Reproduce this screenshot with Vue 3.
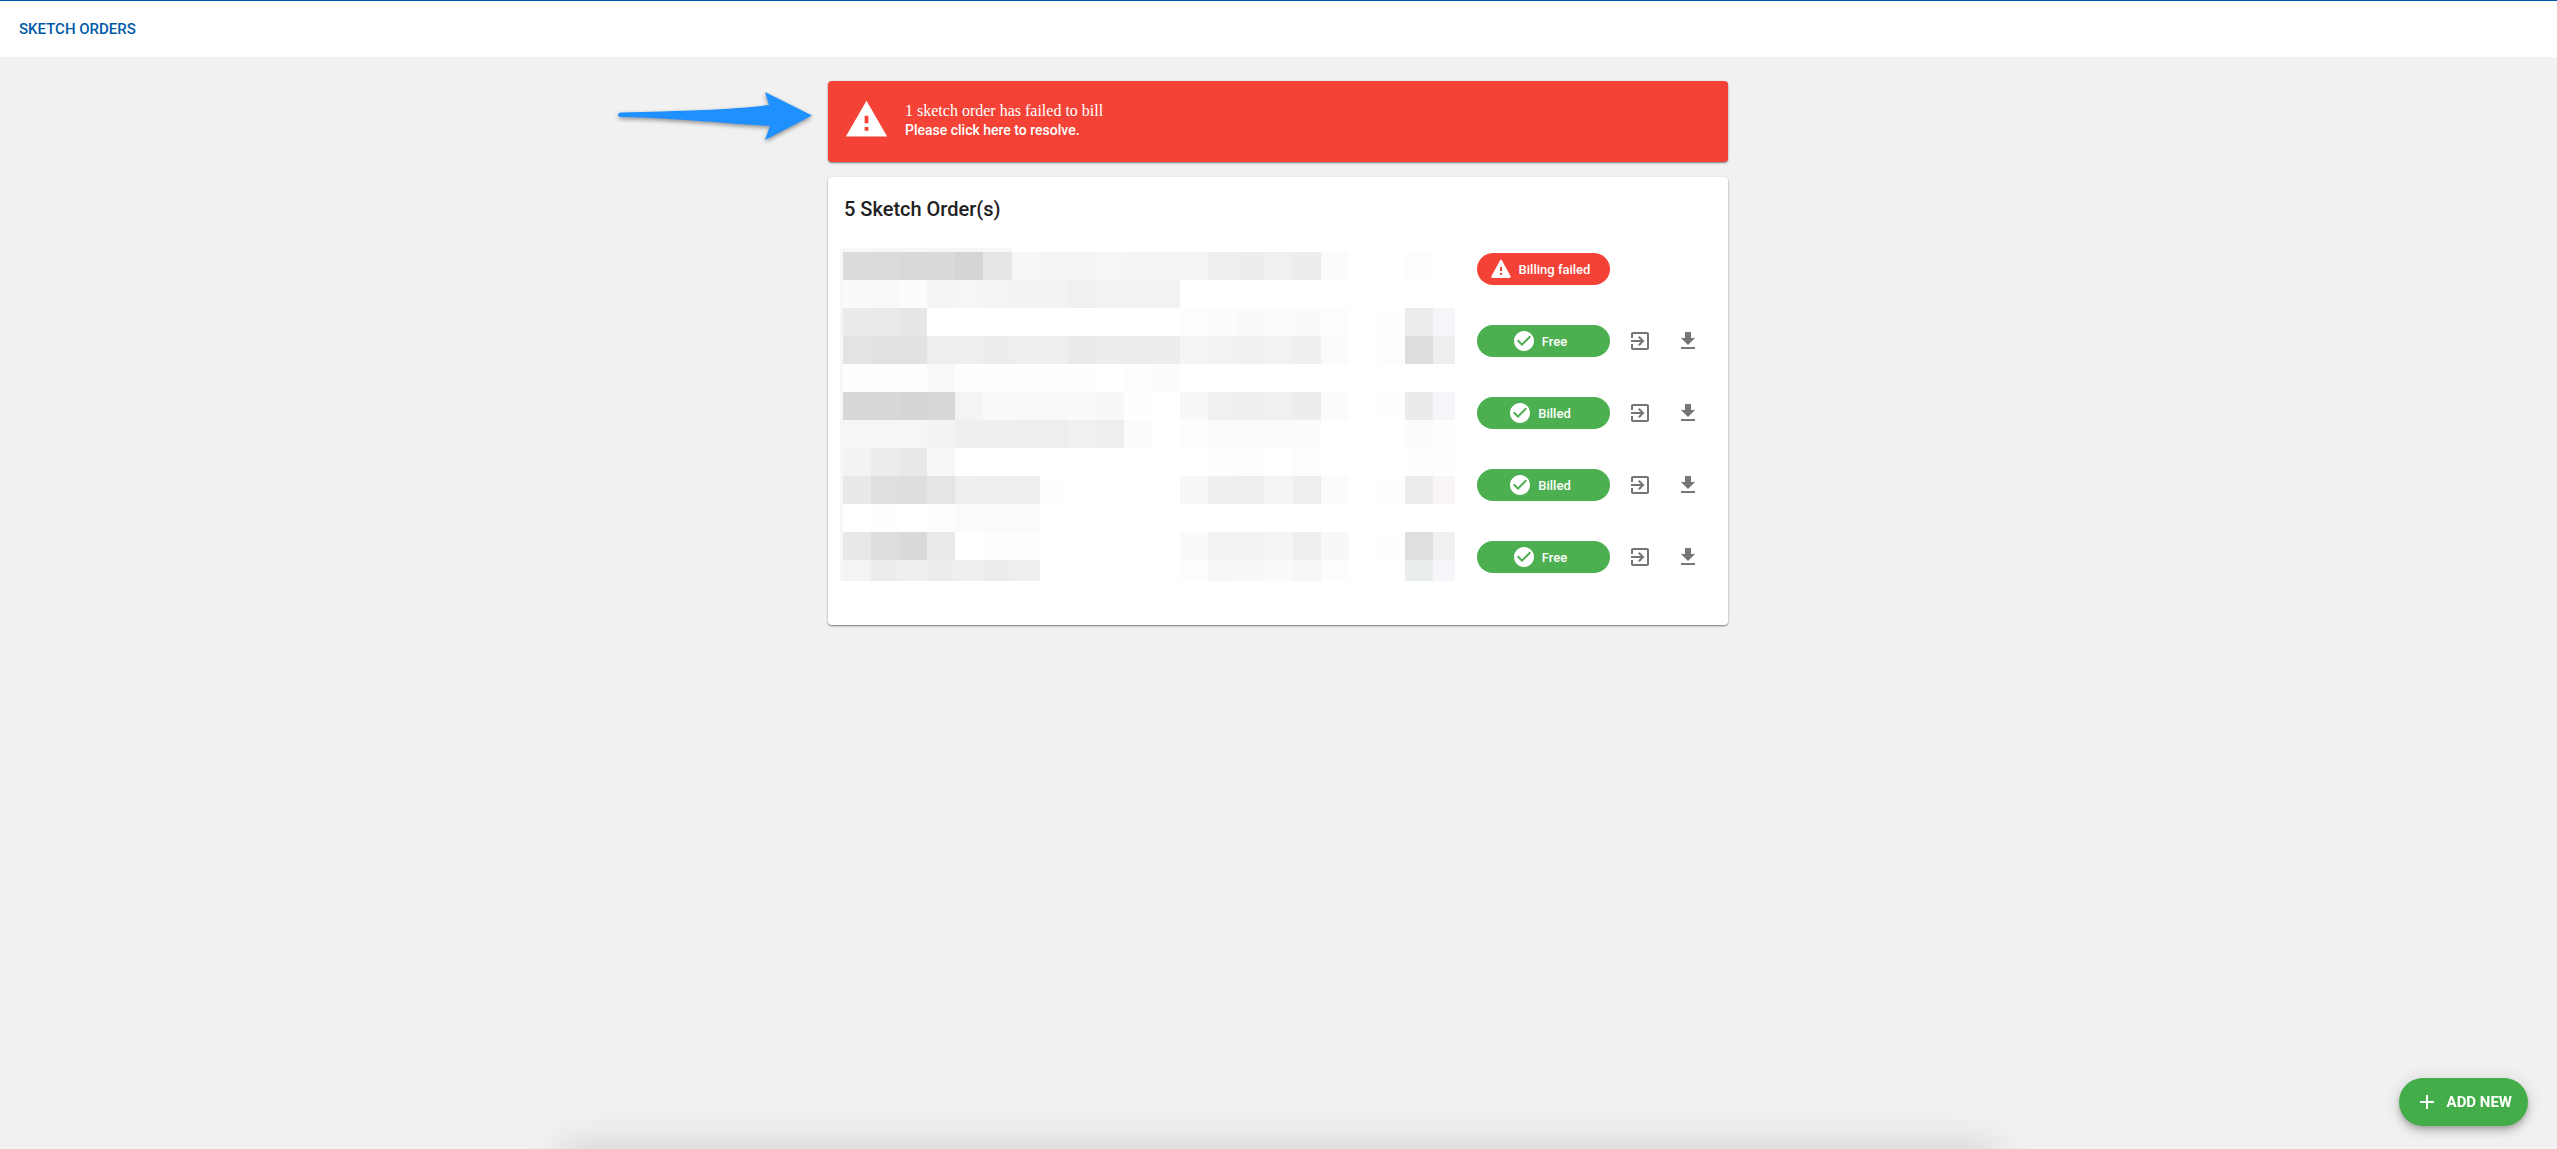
<template>
  <div class="page">
    <header class="toolbar">
      <h1 class="toolbar-title">Sketch Orders</h1>
    </header>

    <main class="content">
      <svg class="pointer" viewBox="0 0 194 48" aria-hidden="true">
        <path
          d="M3 20.500C60 19 112 18 151 13L147 0L194 23.500L147 48L152 34C112 32 60 26 3 25C-1 25 -1 20.500 3 20.500Z"
          fill="#1e90ff"
        />
      </svg>

      <a class="alert" href="#orders">
        <svg class="alert-icon" viewBox="0 0 24 24" aria-hidden="true">
          <path :d="icons.warning" />
        </svg>
        <span class="alert-text">
          <span class="alert-title">1 sketch order has failed to bill</span>
          <span class="alert-subtitle">Please click here to resolve.</span>
        </span>
      </a>

      <section id="orders" class="card">
        <h2 class="card-title">{{ orders.length }} Sketch Order(s)</h2>
        <div class="card-body">
          <div class="redacted" aria-hidden="true">
            <span
              v-for="(color, index) in cells"
              :key="index"
              :style="{ backgroundColor: color }"
            ></span>
          </div>

          <ul class="orders">
            <li v-for="order in orders" :key="order.id" class="order">
              <span :class="['chip', order.failed ? 'error' : 'success']">
                <svg class="icon" viewBox="0 0 24 24" aria-hidden="true">
                  <path :d="order.failed ? icons.warningRound : icons.check" />
                </svg>
                {{ order.status }}
              </span>
              <template v-if="!order.failed">
                <button class="icon-btn" type="button" aria-label="Open order">
                  <svg class="icon" viewBox="0 0 24 24">
                    <path :d="icons.open" />
                  </svg>
                </button>
                <button class="icon-btn" type="button" aria-label="Download order">
                  <svg class="icon" viewBox="0 0 24 24">
                    <path :d="icons.download" />
                  </svg>
                </button>
              </template>
            </li>
          </ul>
        </div>
      </section>
    </main>

    <button class="fab" type="button">
      <svg class="icon" viewBox="0 0 24 24" aria-hidden="true">
        <path :d="icons.plus" />
      </svg>
      Add new
    </button>
    <div class="bottom-shadow"></div>
  </div>
</template>

<script setup>
import { ref } from 'vue'

const icons = {
  warning: 'M1 21h22L12 2 1 21zm12-3h-2v-2h2v2zm0-4h-2v-4h2v4z',
  warningRound:
    'M3.700 21h16.600c1.200 0 1.700-.900 1.200-1.900L12.700 2.900c-.400-.700-1-.700-1.400 0L2.500 19.100c-.500 1 0 1.900 1.200 1.900zM13 18h-2v-2h2v2zm0-4h-2v-4h2v4z',
  check:
    'M12 2C6.480 2 2 6.480 2 12s4.480 10 10 10 10-4.480 10-10S17.520 2 12 2zm-2 15l-5-5 1.410-1.410L10 14.170l7.590-7.590L19 8l-9 9z',
  open: 'M10.090 15.590L11.500 17l5-5-5-5-1.410 1.410L12.670 11H3v2h9.670l-2.580 2.590zM19 3H5c-1.110 0-2 .900-2 2v4h2V5h14v14H5v-4H3v4c0 1.100.890 2 2 2h14c1.100 0 2-.900 2-2V5c0-1.100-.900-2-2-2z',
  download: 'M19 9h-4V3H9v6H5l7 7 7-7zM5 18v2h14v-2H5z',
  plus: 'M19 13h-6v6h-2v-6H5v-2h6V5h2v6h6v2z',
}

const orders = ref([
  { id: 1, status: 'Billing failed', failed: true },
  { id: 2, status: 'Free', failed: false },
  { id: 3, status: 'Billed', failed: false },
  { id: 4, status: 'Billed', failed: false },
  { id: 5, status: 'Free', failed: false },
])

// Shades of the hidden order details, one line per mosaic row.
// Two digits are a grey, six digits a full colour.
const shades = [
  'dc db d9 da d5 e5 f7 f5 f5 f6 f5 f5 f5 ee ed f0 ed fb ff ff fffcfd ff',
  'fa f9 fb f5 f6 f4 f3 f3 f0 f2 f2 f2 ff ff ff ff ff ff ff ff ff ff',
  'eb ea e7 ff ff ff ff ff ff ff ff ff fd fc fa fb fa fd ff fe ebedec f7f5f9',
  'e3 e2 e2 ee ee ed ee ee ea ed ec ed f5 f2 f1 f2 ef fb ff fd dd f0edf1',
  'fd fd fd f9 fe fe fe fe fe ff fd fc ff ff ff ff ff ff ff ff ff ff',
  'd8 d8 d5 d7 f4 fa f9 f9 fa f8 fe ff f8 f0 ef f0 ed fb ff fe eb f7f5f9',
  'f6 f6 f6 f3 ef ef ee ee f1 ee fb ff fd fb fb fb fb ff ff ff fb fd',
  'f3 ed e9 f7 ff ff ff ff ff ff ff ff ff fd fd ff fd ff ff ff fe fe',
  'e9 df de e5 ef ee ee fe ff ff ff ff f8 ef ee f4 ee fb ff fe ed faf5f9',
  'ff fe ff fd fb fb fb ff ff ff ff ff ff ff ff ff ff ff ff ff ff ff',
  'e8 de da ea ff fd fd ff ff ff ff ff fa f2 f2 f4 ee f8 ff fe df f2eff3',
  'f4 ed ee ed ee ed ee ff ff ff ff ff fd f7 f8 fa f6 fd ff ff e9edeb f8f6fa',
]

const cells = shades
  .join(' ')
  .split(' ')
  .map((shade) => `#${shade.length === 2 ? shade.repeat(3) : shade}`)
</script>

<style>
body {
  margin: 0;
  background-color: #f1f1f1;
}
</style>

<style scoped>
.page {
  min-height: 100vh;
  font-family: Roboto, sans-serif;
  color: #212121;
}

.toolbar {
  display: flex;
  align-items: center;
  height: 56px;
  padding: 0 19px;
  border-top: 1px solid #005aa9;
  background-color: #fff;
}

.toolbar-title {
  margin: 0;
  color: #005aa9;
  font-size: 15px;
  font-weight: 500;
  line-height: 20px;
  text-transform: uppercase;
}

.content {
  position: relative;
  max-width: 900px;
  margin: 0 auto;
  padding: 24px 1px 0 0;
}

/* Callout arrow that lies beside the alert */
.pointer {
  position: absolute;
  top: 35px;
  right: 100%;
  width: 194px;
  height: 48px;
  margin-right: 16px;
  overflow: visible;
  filter: drop-shadow(0 2px 2px rgba(0, 0, 0, 0.4));
}

.alert {
  display: flex;
  align-items: flex-start;
  gap: 16px;
  min-height: 49px;
  padding: 16px;
  border-radius: 4px;
  background-color: #f44336;
  color: #fff;
  text-decoration: none;
  box-shadow: 0 1px 2px rgba(0, 0, 0, 0.5);
}

.alert-icon {
  width: 45px;
  height: 45px;
  fill: currentColor;
}

.alert-text {
  display: flex;
  flex-direction: column;
  padding-top: 4px;
}

.alert-title {
  font-family: 'Liberation Serif', serif;
  font-size: 16px;
  line-height: 20px;
}

.alert-subtitle {
  font-size: 14px;
  font-weight: 500;
  line-height: 18px;
}

.card {
  margin-top: 15px;
  padding: 16px 16px 32px 12px;
  border-radius: 4px;
  background-color: #fff;
  box-shadow: 0 1px 2px rgba(0, 0, 0, 0.5);
}

.card-title {
  margin: 0 0 8px 4px;
  font-size: 20px;
  font-weight: 500;
  line-height: 32px;
}

.card-body {
  display: flex;
  justify-content: space-between;
  align-items: flex-start;
}

.redacted {
  display: grid;
  grid-template-columns: repeat(5, 28px) 29px repeat(9, 28px) 29px repeat(5, 28px) 22px;
  grid-template-rows: repeat(11, 28px) 21px;
  margin-top: 15px;
  padding: 4px 0 0 3px;
  background:
    linear-gradient(#f7f7f7, #f7f7f7) 0 0 / 172px 4px no-repeat,
    linear-gradient(#f7f7f7, #f7f7f7) 0 0 / 3px 100% no-repeat;
}

.orders {
  width: 235px;
  margin: 0;
  padding: 0;
  list-style: none;
}

.order {
  display: flex;
  align-items: center;
  height: 72px;
}

.chip {
  display: flex;
  justify-content: center;
  align-items: center;
  gap: 6px;
  box-sizing: border-box;
  width: 133px;
  height: 32px;
  margin-right: 6px;
  padding-right: 8px;
  border-radius: 16px;
  color: #fff;
  font-size: 13px;
  font-weight: 500;
}

.chip.success {
  background-color: #4caf50;
}

.chip.error {
  background-color: #f44336;
}

.icon {
  display: block;
  width: 24px;
  height: 24px;
  fill: currentColor;
}

.icon-btn {
  display: flex;
  justify-content: center;
  align-items: center;
  width: 48px;
  height: 48px;
  padding: 0;
  border: none;
  background: none;
  color: #757575;
  cursor: pointer;
}

.fab {
  position: fixed;
  right: 29px;
  bottom: 23px;
  display: flex;
  align-items: center;
  gap: 8px;
  height: 48px;
  padding: 0 16px;
  border: none;
  border-radius: 24px;
  background-color: #43ad4a;
  color: #fff;
  font-family: inherit;
  font-size: 15px;
  font-weight: 700;
  text-transform: uppercase;
  cursor: pointer;
  box-shadow:
    0 3px 5px -1px rgba(0, 0, 0, 0.2),
    0 6px 10px rgba(0, 0, 0, 0.14),
    0 1px 18px rgba(0, 0, 0, 0.12);
}

.bottom-shadow {
  position: fixed;
  right: 22%;
  bottom: -40px;
  left: 22%;
  height: 40px;
  box-shadow: 0 0 40px rgba(0, 0, 0, 0.16);
  pointer-events: none;
}
</style>
